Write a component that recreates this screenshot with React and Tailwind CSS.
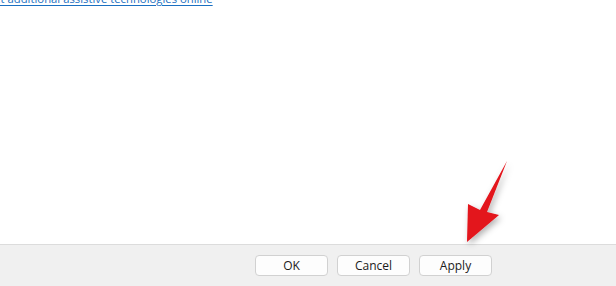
import React from "react";

const font = { fontFamily: '"Segoe UI", "Open Sans", "Noto Sans", sans-serif' };

const DialogButton = ({ children }) => (
  <button
    type="button"
    className="w-[73px] h-[21px] rounded-[4px] border border-[#d1d1d1] bg-[#fdfdfd] text-[12px] leading-none text-[#1b1b1b]"
  >
    {children}
  </button>
);

export default function App() {
  return (
    <div className="relative w-[616px] h-[286px] flex flex-col bg-white overflow-hidden" style={font}>
      <div className="flex-1">
        <a
          href="#"
          className="block -mt-[9px] -ml-[14px] text-[11.3px] leading-[16px] text-[#1a6fc1] underline underline-offset-2 whitespace-nowrap"
        >
          Get additional assistive technologies online
        </a>
      </div>
      <div className="h-[42px] border-t border-[#dcdcdc] bg-[#f0f0f0] flex items-start justify-end gap-[9px] pt-[10px] pr-[124px]">
        <DialogButton>OK</DialogButton>
        <DialogButton>Cancel</DialogButton>
        <DialogButton>Apply</DialogButton>
      </div>
      <svg
        className="absolute left-0 top-0 pointer-events-none"
        width="616"
        height="286"
        viewBox="0 0 616 286"
      >
        <defs>
          <filter id="sh" x="-50%" y="-50%" width="200%" height="200%">
            <feDropShadow dx="2" dy="3" stdDeviation="3" floodColor="#000" floodOpacity="0.3" />
          </filter>
        </defs>
        <polygon
          points="507,161 487,212 499,215 467,242 468,204 480,210"
          fill="#e3131b"
          filter="url(#sh)"
        />
      </svg>
    </div>
  );
}
